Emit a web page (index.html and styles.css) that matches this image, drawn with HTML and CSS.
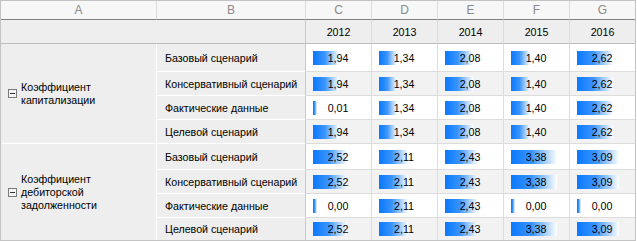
FILE: index.html
```html
<!DOCTYPE html>
<html lang="ru">
<head>
<meta charset="utf-8">
<title>Коэффициенты</title>
<link rel="stylesheet" href="styles.css">
</head>
<body>
<div class="sheet">
  <div class="hd">A</div><div class="hd">B</div><div class="hd">C</div><div class="hd">D</div><div class="hd">E</div><div class="hd">F</div><div class="hd last-col">G</div>

  <div class="yr yr-blank"></div><div class="yr">2012</div><div class="yr">2013</div><div class="yr">2014</div><div class="yr">2015</div><div class="yr last-col">2016</div>

  <div class="grp grp1"><span class="toggle"></span><span class="grp-label">Коэффициент<br>капитализации</span></div>
  <div class="lbl">Базовый сценарий</div>
  <div class="val" style="--w:26px">1,94</div><div class="val" style="--w:18px">1,34</div><div class="val" style="--w:28px">2,08</div><div class="val" style="--w:19px">1,40</div><div class="val last-col" style="--w:36px">2,62</div>

  <div class="lbl">Консервативный сценарий</div>
  <div class="val alt" style="--w:26px">1,94</div><div class="val alt" style="--w:18px">1,34</div><div class="val alt" style="--w:28px">2,08</div><div class="val alt" style="--w:19px">1,40</div><div class="val alt last-col" style="--w:36px">2,62</div>

  <div class="lbl">Фактические данные</div>
  <div class="val" style="--w:4px">0,01</div><div class="val" style="--w:18px">1,34</div><div class="val" style="--w:28px">2,08</div><div class="val" style="--w:19px">1,40</div><div class="val last-col" style="--w:36px">2,62</div>

  <div class="lbl">Целевой сценарий</div>
  <div class="val alt" style="--w:26px">1,94</div><div class="val alt" style="--w:18px">1,34</div><div class="val alt" style="--w:28px">2,08</div><div class="val alt" style="--w:19px">1,40</div><div class="val alt last-col" style="--w:36px">2,62</div>

  <div class="grp grp2 end"><span class="toggle"></span><span class="grp-label">Коэффициент<br>дебиторской<br>задолженности</span></div>
  <div class="lbl">Базовый сценарий</div>
  <div class="val" style="--w:34px">2,52</div><div class="val" style="--w:29px">2,11</div><div class="val" style="--w:33px">2,43</div><div class="val" style="--w:46px">3,38</div><div class="val last-col" style="--w:42px">3,09</div>

  <div class="lbl">Консервативный сценарий</div>
  <div class="val alt" style="--w:34px">2,52</div><div class="val alt" style="--w:29px">2,11</div><div class="val alt" style="--w:33px">2,43</div><div class="val alt" style="--w:46px">3,38</div><div class="val alt last-col" style="--w:42px">3,09</div>

  <div class="lbl">Фактические данные</div>
  <div class="val" style="--w:4px">0,00</div><div class="val" style="--w:29px">2,11</div><div class="val" style="--w:33px">2,43</div><div class="val" style="--w:4px">0,00</div><div class="val last-col" style="--w:4px">0,00</div>

  <div class="lbl end">Целевой сценарий</div>
  <div class="val alt end" style="--w:34px">2,52</div><div class="val alt end" style="--w:29px">2,11</div><div class="val alt end" style="--w:33px">2,43</div><div class="val alt end" style="--w:46px">3,38</div><div class="val alt end last-col" style="--w:42px">3,09</div>
</div>
</body>
</html>
```

FILE: styles.css
```css
html, body {
  margin: 0;
  padding: 0;
  background: #ffffff;
}

body {
  font-family: "Liberation Sans", Arial, sans-serif;
  font-size: 8pt;
  color: #000;
}

.sheet {
  display: grid;
  width: 636px;
  box-sizing: border-box;
  border: 1px solid #c3c3c3;
  grid-template-columns: 156px 149px 66px 66px 66px 66px 65px;
  grid-template-rows: 19px 24px 28px 24px 24px 24px 26px 24px 24px 22px;
}

.sheet > div {
  box-sizing: border-box;
  border-right: 1px solid #dcdcdc;
  border-bottom: 1px solid #dcdcdc;
}

.sheet > .last-col {
  border-right: none;
}

.sheet > .end {
  border-bottom: none;
}

.hd {
  background: #f7f7f7;
  color: #8a8a8a;
  font-size: 9pt;
  display: flex;
  align-items: center;
  justify-content: center;
  border-bottom-color: #7f7f7f !important;
}

.yr {
  background: #eeeeee;
  display: flex;
  align-items: center;
  justify-content: center;
  border-bottom-color: #bcbcbc !important;
  border-right-color: #d9d9d9;
}

.yr-blank {
  grid-column: span 2;
  border-right-color: #c9c9c9 !important;
}

.grp {
  grid-row: span 4;
  background: #eeeeee;
  border-right-color: #ffffff !important;
  border-bottom-color: #ffffff !important;
  display: flex;
  align-items: center;
  padding-left: 7px;
  gap: 4px;
}

.grp-label {
  line-height: 13px;
}

.toggle {
  position: relative;
  width: 9px;
  height: 9px;
  box-sizing: border-box;
  border: 1px solid #7a7a7a;
  background: #f4f4f4;
  flex: none;
}

.toggle::after {
  content: "";
  position: absolute;
  left: 1px;
  right: 1px;
  top: 3px;
  height: 1px;
  background: #333333;
}

.lbl {
  background: #eeeeee;
  border-bottom-color: #ffffff !important;
  border-right-color: #c9c9c9 !important;
  display: flex;
  align-items: center;
  padding-left: 8px;
  white-space: nowrap;
}

.val {
  background-color: #ffffff;
  background-image: linear-gradient(90deg, #0a78ff 0%, #3a94ff 45%, #ffffff 100%);
  background-repeat: no-repeat;
  background-size: var(--w) 14px;
  background-position: 7px center;
  display: flex;
  align-items: center;
  justify-content: center;
  padding-right: 1px;
}

.val.alt {
  background-color: #f2f2f2;
}
```
